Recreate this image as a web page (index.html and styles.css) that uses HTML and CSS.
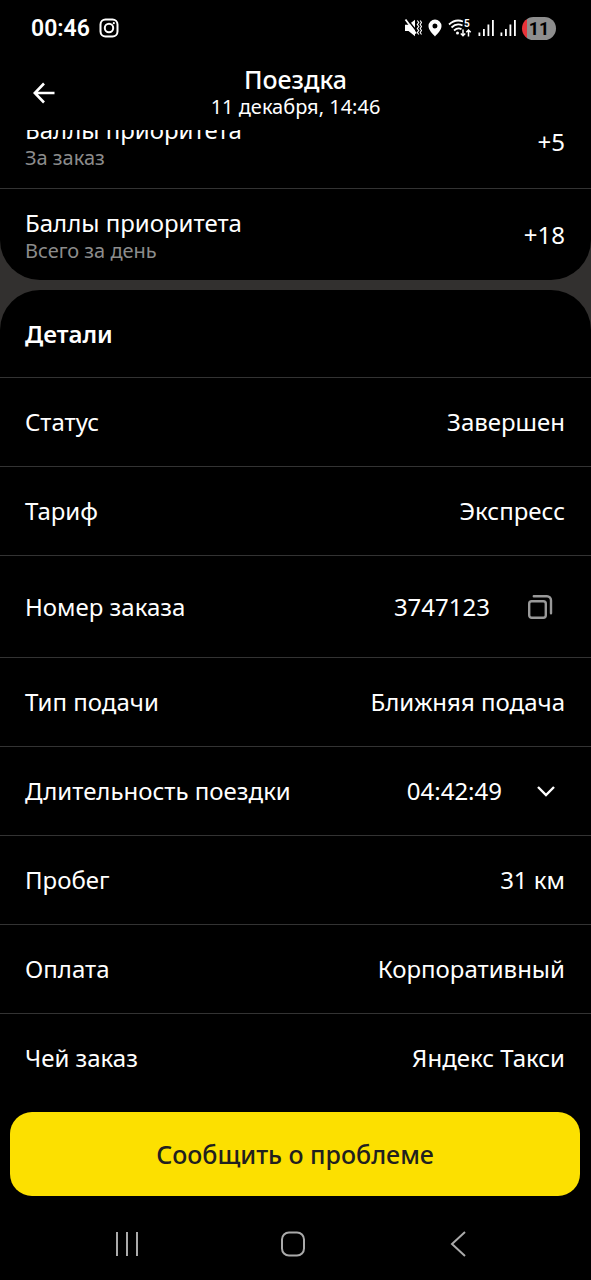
FILE: index.html
```html
<!DOCTYPE html>
<html lang="ru">
<head>
<meta charset="utf-8">
<meta name="viewport" content="width=device-width, initial-scale=1">
<title>Поездка</title>
<link rel="stylesheet" href="styles.css">
</head>
<body>
<div class="screen">
  <div class="status-bar">
    <div class="status-left">
      <span class="clock">00:46</span>
      <svg class="icon" width="20" height="20" viewBox="0 0 20 20" fill="none" stroke="#fff" stroke-width="2"><rect x="1.5" y="1.5" width="17" height="17" rx="5"/><circle cx="10" cy="10" r="4.2"/><circle cx="14.8" cy="5.2" r="1.1" fill="#fff" stroke="none"/></svg>
    </div>
    <div class="status-right">
      <svg class="icon" width="18" height="20" viewBox="0 0 18 20"><path d="M1 6.800h3.500L11 1.800v16.400L4.500 13H1z" fill="#fff"/><path d="M3 1l10 12.500" stroke="#000" stroke-width="1.500"/><path d="M1.500 1.500l10.500 14" stroke="#fff" stroke-width="1.800"/><path d="M13.300 2.500l1.500 2-1.500 2 1.500 2-1.500 2 1.500 2-1.500 2 1.500 2M16.200 2.500l1.300 2-1.300 2 1.300 2-1.300 2 1.300 2-1.300 2 1.300 2" stroke="#fff" stroke-width="1.100" fill="none"/></svg>
      <svg class="icon" width="14" height="18" viewBox="0 0 14 18"><path fill="#fff" fill-rule="evenodd" d="M7 .5a6.500 6.500 0 0 1 6.500 6.500C13.500 11 9.500 14.500 7 17.500 4.500 14.500.5 11 .5 7A6.500 6.500 0 0 1 7 .5zm0 4a2.500 2.500 0 1 0 0 5 2.500 2.500 0 0 0 0-5z"/></svg>
      <svg class="icon" width="24" height="20" viewBox="0 0 24 20" fill="none" stroke="#fff" stroke-width="1.800"><path d="M1 6.500Q7.500.5 15 3.500M3.500 9.500Q8.500 4.500 14.500 7.500M6 12.500q4-3.500 7.500-1.200"/><circle cx="9.500" cy="15" r="1.500" fill="#fff" stroke="none"/><path d="M15 11.500v6M12.800 15.500l2.200 2.200 2.200-2.200M20.500 18.500v-6.500M18.300 14.200l2.200-2.200 2.200 2.200" stroke-width="1.500"/><text x="16" y="9" class="wifi-mark">5</text></svg>
      <svg class="icon" width="16" height="18" viewBox="0 0 16 18" fill="#fff"><path d="M.5 13.500h1.800V17H.5zM5 10h1.800v7H5zM9.500 5.500h1.800V17H9.500zM14 1h1.800v16H14z"/></svg>
      <svg class="icon" width="16" height="18" viewBox="0 0 16 18" fill="#fff"><path d="M.5 13.500h1.800V17H.5zM5 10h1.800v7H5zM9.500 5.500h1.800V17H9.500zM14 1h1.800v16H14z"/></svg>
      <span class="battery">11</span>
    </div>
  </div>

  <header class="header">
    <button class="back" type="button" aria-label="Назад">
      <svg class="icon" width="22" height="22" viewBox="0 0 22 22" fill="none" stroke="#fff" stroke-width="2.600"><path d="M21.500 11H2.500M11 1.500L1.800 11l9.200 9.500"/></svg>
    </button>
    <div class="heading">
      <h1 class="title">Поездка</h1>
      <p class="date">11 декабря, 14:46</p>
    </div>
  </header>

  <main class="content">
    <section class="card card-points">
      <div class="row row-points">
        <div class="label">Баллы приоритета<small class="hint">За заказ</small></div>
        <div class="value">+5</div>
      </div>
      <div class="row row-points">
        <div class="label">Баллы приоритета<small class="hint">Всего за день</small></div>
        <div class="value">+18</div>
      </div>
    </section>

    <section class="card card-details">
      <div class="row row-title"><h2 class="section-title">Детали</h2></div>
      <div class="row"><div class="label">Статус</div><div class="value">Завершен</div></div>
      <div class="row"><div class="label">Тариф</div><div class="value">Экспресс</div></div>
      <div class="row row-tall">
        <div class="label">Номер заказа</div>
        <div class="value">3747123</div>
        <button class="action copy" type="button" aria-label="Скопировать">
          <svg class="icon" width="26" height="26" viewBox="0 0 26 26" fill="none" stroke="#999" stroke-width="2.400"><rect x="2.200" y="7.200" width="16.600" height="16.600" rx="2.500"/><path d="M6.800 2.200H20a4 4 0 0 1 4 4v13" stroke-linecap="round"/></svg>
        </button>
      </div>
      <div class="row"><div class="label">Тип подачи</div><div class="value">Ближняя подача</div></div>
      <div class="row">
        <div class="label">Длительность поездки</div>
        <div class="value">04:42:49</div>
        <button class="action expand" type="button" aria-label="Развернуть">
          <svg class="icon" width="18" height="12" viewBox="0 0 18 12" fill="none" stroke="#fff" stroke-width="2.400"><path d="M1 2l8 8 8-8"/></svg>
        </button>
      </div>
      <div class="row"><div class="label">Пробег</div><div class="value">31 км</div></div>
      <div class="row"><div class="label">Оплата</div><div class="value">Корпоративный</div></div>
      <div class="row"><div class="label">Чей заказ</div><div class="value">Яндекс Такси</div></div>
    </section>
  </main>

  <footer class="footer">
    <button class="report" type="button">Сообщить о проблеме</button>
  </footer>

  <nav class="nav-bar">
    <button class="nav-button" type="button" aria-label="Недавние">
      <svg class="icon" width="26" height="28" viewBox="0 0 26 28" stroke="#aaa" stroke-width="2"><path d="M3 2v24M13 2v24M23 2v24"/></svg>
    </button>
    <button class="nav-button" type="button" aria-label="Домой">
      <svg class="icon" width="26" height="28" viewBox="0 0 26 28" fill="none" stroke="#aaa" stroke-width="2"><rect x="2" y="2.500" width="22" height="23" rx="7"/></svg>
    </button>
    <button class="nav-button" type="button" aria-label="Назад">
      <svg class="icon" width="26" height="28" viewBox="0 0 26 28" fill="none" stroke="#aaa" stroke-width="2"><path d="M20 2L7 14l13 12"/></svg>
    </button>
  </nav>
</div>
</body>
</html>
```
FILE: styles.css
```css
* {
  box-sizing: border-box;
}

body {
  margin: 0;
  background: #000;
  color: #fff;
  font-family: "Noto Sans", "Open Sans", sans-serif;
}

button {
  padding: 0;
  border: 0;
  background: none;
  color: inherit;
  font-family: inherit;
}

.icon {
  display: block;
  flex: none;
}

.screen {
  display: flex;
  flex-direction: column;
  height: 100vh;
}

.status-bar {
  display: flex;
  flex: none;
  align-items: center;
  justify-content: space-between;
  height: 56px;
  padding: 0 35px 0 31px;
}

.status-left {
  display: flex;
  align-items: center;
  gap: 9px;
}

.clock {
  font-family: Roboto, sans-serif;
  font-size: 23px;
  font-weight: 600;
}

.status-right {
  display: flex;
  align-items: center;
  gap: 6px;
}

.wifi-mark {
  fill: #fff;
  stroke: none;
  font: 700 10px Roboto, sans-serif;
}

.battery {
  width: 34px;
  border-radius: 12px;
  background: linear-gradient(90deg, #e8343a 5px, #8e8e8e 5px);
  color: #000;
  font: 700 18px/23px Roboto, sans-serif;
  text-align: center;
}

.header {
  display: grid;
  flex: none;
  grid-template-columns: 48px 1fr 48px;
  align-items: center;
  height: 74px;
  padding: 0 20px;
}

.back {
  display: flex;
  align-items: center;
  justify-content: center;
  height: 48px;
}

.heading {
  text-align: center;
}

.title {
  margin: 0;
  font-size: 25px;
  font-weight: 500;
  line-height: 28px;
}

.date {
  margin: 0;
  font-size: 20px;
  line-height: 28px;
}

.content {
  display: flex;
  flex: 1;
  flex-direction: column;
  justify-content: flex-end;
  gap: 10px;
  min-height: 0;
  overflow: hidden;
  background: #32302f;
}

.card {
  flex: none;
  background: #000;
}

.card-points {
  border-radius: 0 0 40px 40px;
}

.card-details {
  border-radius: 40px 40px 0 0;
}

.row {
  display: flex;
  align-items: center;
  height: 89px;
  padding: 0 26px 0 25px;
  font-size: 24px;
  line-height: 32px;
}

.row + .row {
  border-top: 1px solid #333;
}

.row-points {
  height: 92px;
}

.row-title {
  height: 87px;
}

.row-tall {
  height: 102px;
}

.label {
  flex: 1;
}

.hint {
  display: block;
  color: #8c8c8c;
  font-size: 20px;
  line-height: 24px;
}

.section-title {
  margin: 0;
  font-size: 24px;
  font-weight: 600;
}

.action {
  display: flex;
  align-items: center;
  justify-content: center;
  height: 48px;
}

.copy {
  width: 50px;
  margin-left: 25px;
}

.expand {
  width: 38px;
  margin-left: 25px;
}

.footer {
  flex: none;
  padding: 10px 11px 0 10px;
}

.report {
  width: 100%;
  height: 84px;
  border-radius: 22px;
  background: #fce000;
  color: #21201f;
  font-size: 25px;
  font-weight: 500;
}

.nav-bar {
  display: flex;
  flex: none;
  align-items: center;
  justify-content: space-between;
  height: 84px;
  padding: 12px 120px 0 114px;
}
```
